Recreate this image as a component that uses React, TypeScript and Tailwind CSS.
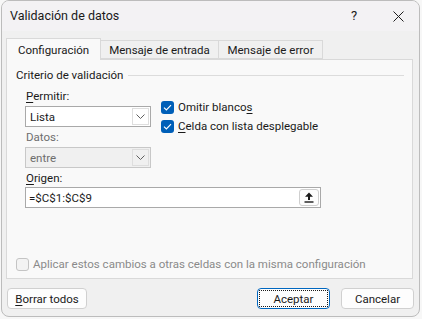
import React from 'react';

const Chevron = () => (
    <svg width="9" height="5" viewBox="0 0 9 5">
        <path d="M0.5 0.5 L4.5 4.5 L8.5 0.5" fill="none" stroke="#5f5f5f" strokeWidth="1" />
    </svg>
);

const Checked = () => (
    <span className="w-[13px] h-[13px] rounded-[3px] bg-[#005fb8] flex items-center justify-center shrink-0">
        <svg width="9" height="7" viewBox="0 0 9 7">
            <path d="M1 3.6 L3.4 6 L8 1.2" fill="none" stroke="white" strokeWidth="1.2" />
        </svg>
    </span>
);

const Select = ({ value, disabled }: { value: string; disabled?: boolean }) => (
    <div
        className={
            disabled
                ? 'w-[126px] h-[21px] border border-[#c8c8c8] bg-[#f0f0f0] text-[#6d6d6d] flex items-stretch'
                : 'w-[126px] h-[21px] border border-[#a9a9a9] bg-white text-[#1a1a1a] flex items-stretch'
        }
    >
        <span className="flex-1 pl-[4px] flex items-center">{value}</span>
        <span className="w-[17px] my-[1px] mr-[1px] border border-[#dedede] flex items-center justify-center">
            <Chevron />
        </span>
    </div>
);

const Label = ({ children, muted }: { children: React.ReactNode; muted?: boolean }) => (
    <div className={muted ? 'h-[16px] leading-[16px] pl-[1px] text-[#6e6e6e]' : 'h-[16px] leading-[16px] pl-[1px] text-[#1a1a1a]'}>
        {children}
    </div>
);

export default function App() {
    return (
        <div className="w-[422px] h-[319px] bg-[#f7f7f7] font-['Roboto',sans-serif] text-[11.5px] text-[#1a1a1a] leading-[16px]">
            <div className="w-[419px] h-[317px] ml-[1px] border border-[#bcbcbc] rounded-[8px] overflow-hidden flex flex-col bg-[#f0f0f0]">
                {/* Title bar */}
                <div className="h-[30px] shrink-0 bg-[#f3f2f4] flex items-center pl-[8px]">
                    <span className="flex-1 text-[12.5px]">Validación de datos</span>
                    <span className="w-[46px] text-center text-[13px]">?</span>
                    <span className="w-[42px] flex items-center justify-center">
                        <svg width="11" height="11" viewBox="0 0 11 11">
                            <path d="M0.5 0.5 L10.5 10.5 M10.5 0.5 L0.5 10.5" stroke="#1f1f1f" strokeWidth="1" />
                        </svg>
                    </span>
                </div>

                {/* Tabs */}
                <div className="mt-[7px] ml-[4px] h-[21px] flex items-end relative z-10">
                    <div className="w-[95px] h-[22px] -mb-px border border-b-0 border-[#d9d9d9] bg-[#f9f9f9] flex items-center justify-center">
                        Configuración
                    </div>
                    <div className="w-[119px] h-[19px] -ml-px border border-[#d9d9d9] bg-[#f0f0f0] flex items-center justify-center">
                        Mensaje de entrada
                    </div>
                    <div className="w-[105px] h-[19px] -ml-px border border-[#d9d9d9] bg-[#f0f0f0] flex items-center justify-center">
                        Mensaje de error
                    </div>
                </div>

                {/* Panel */}
                <div className="ml-[4px] w-[407px] h-[220px] border border-[#d9d9d9] bg-[#f9f9f9] flex flex-col pl-[9px]">
                    <div className="mt-[7px] h-[16px] flex items-center gap-[5px] pr-[8px]">
                        <span>Criterio de validación</span>
                        <span className="flex-1 h-px bg-[#dcdcdc]" />
                    </div>

                    <div className="pl-[9px] flex">
                        <div className="flex flex-col">
                            <div className="mt-[5px]">
                                <Label>
                                    <span className="underline underline-offset-2">P</span>ermitir:
                                </Label>
                            </div>
                            <div className="mt-[2px]">
                                <Select value="Lista" />
                            </div>
                            <div className="mt-[2px]">
                                <Label muted>Datos:</Label>
                            </div>
                            <div className="mt-[2px]">
                                <Select value="entre" disabled />
                            </div>
                        </div>
                        <div className="ml-[10px] mt-[16px] flex flex-col gap-[3px]">
                            <div className="h-[16px] flex items-center gap-[4px]">
                                <Checked />
                                <span>
                                    Omitir blanco<span className="underline underline-offset-2">s</span>
                                </span>
                            </div>
                            <div className="h-[16px] flex items-center gap-[4px]">
                                <Checked />
                                <span>
                                    <span className="underline underline-offset-2">C</span>elda con lista desplegable
                                </span>
                            </div>
                        </div>
                    </div>

                    <div className="pl-[9px] mt-[2px]">
                        <Label>
                            <span className="underline underline-offset-2">O</span>rigen:
                        </Label>
                        <div className="mt-[1px] w-[296px] h-[21px] border border-[#a9a9a9] bg-white flex items-center">
                            <span className="flex-1 pl-[3px]">=$C$1:$C$9</span>
                            <span className="w-[20px] h-[17px] mr-[1px] border border-[#cfcfcf] rounded-[3px] bg-[#fdfdfd] flex items-center justify-center">
                                <svg width="10" height="11" viewBox="0 0 10 11">
                                    <path d="M5 0.5 L9 4.8 L6 4.8 L6 8 L4 8 L4 4.8 L1 4.8 Z" fill="#1a1a1a" />
                                    <rect x="0.5" y="9.3" width="9" height="1.4" fill="#1a1a1a" />
                                </svg>
                            </span>
                        </div>
                    </div>

                    <div className="mt-auto mb-[6px] h-[16px] flex items-center gap-[4px] text-[#8a8a8a]">
                        <span className="w-[13px] h-[13px] rounded-[3px] border border-[#c4c4c4] bg-[#f3f3f3] shrink-0" />
                        <span>Aplicar estos cambios a otras celdas con la misma configuración</span>
                    </div>
                </div>

                {/* Buttons */}
                <div className="mt-[9px] px-[5px] flex items-center">
                    <button className="w-[80px] h-[21px] rounded-[4px] border border-[#d0d0d0] bg-[#fdfdfd] flex items-center justify-center">
                        <span>
                            <span className="underline underline-offset-2">B</span>orrar todos
                        </span>
                    </button>
                    <div className="flex-1" />
                    <button className="w-[73px] h-[21px] rounded-[4px] border border-[#0067c0] bg-[#fdfdfd] p-[1px] flex">
                        <span className="flex-1 border border-dotted border-[#1a1a1a] flex items-center justify-center">Aceptar</span>
                    </button>
                    <button className="ml-[11px] w-[73px] h-[21px] rounded-[4px] border border-[#d0d0d0] bg-[#fdfdfd] flex items-center justify-center">
                        Cancelar
                    </button>
                </div>
            </div>
        </div>
    );
}
